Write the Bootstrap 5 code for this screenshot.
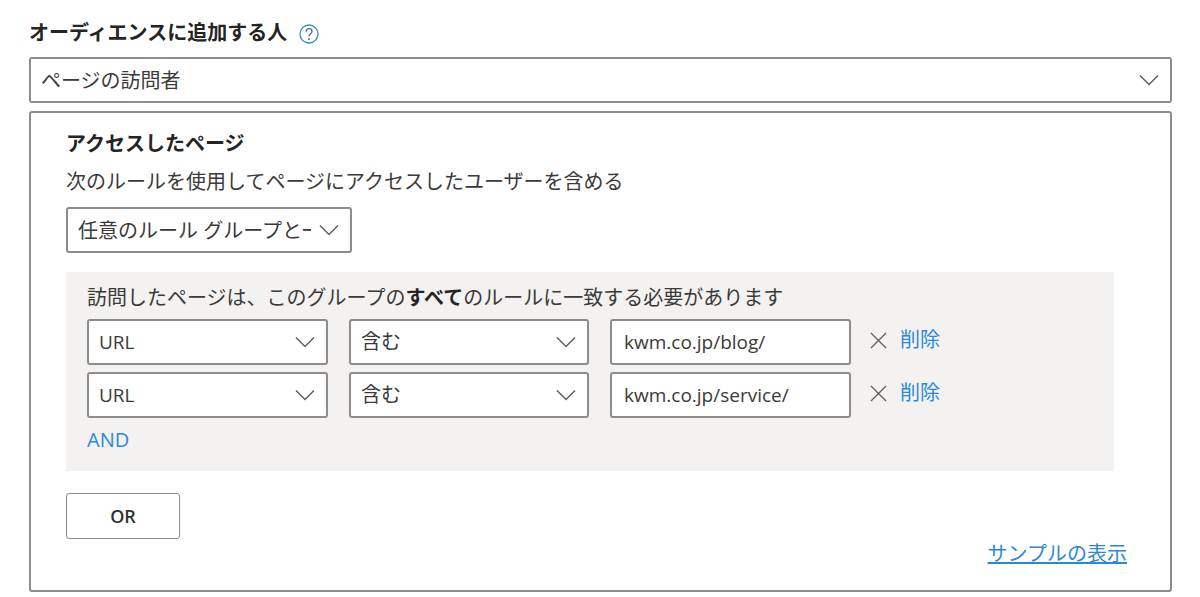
<!DOCTYPE html>
<html lang="ja">
<head>
<meta charset="utf-8">
<title>オーディエンスに追加する人</title>
<link href="https://cdn.jsdelivr.net/npm/bootstrap@5.3.0/dist/css/bootstrap.min.css" rel="stylesheet">
<style>
html,body{height:597px;overflow:hidden;background:#fff}
body{font-family:"Open Sans","Noto Sans CJK JP",sans-serif;font-size:20px;color:#3b3a39;line-height:26px}
.page-wrap{padding:19px 28px 0 29px}
.head-label{font-weight:700;color:#252423;height:26px;margin-bottom:12px}
.head-text{padding-top:1px}
.help-ico{width:20px;height:20px;margin-left:12px;margin-top:3px}
.fake-sel{height:46px;border:2px solid #8f8d8b;border-radius:3px;background:#fff;padding:0 11px 0 10px;display:flex;align-items:center;justify-content:space-between;white-space:nowrap;overflow:hidden;flex:none}
.fake-sel svg{flex:none;width:20px;height:12px}
.sel-text{overflow:hidden;padding-top:2px}
.latin-val{font-size:19px}
.panel-box{margin-top:8px;height:481px;border:2px solid #8f8d8b;border-radius:3px;padding:18px 42px 0 35px}
.panel-title{font-weight:700;color:#252423;height:26px;margin-bottom:12px}
.panel-sub{height:26px;margin-bottom:12px}
.w-rule{width:286px}
.group-box{background:#f3f2f1;height:199px;width:1048px;margin-top:19px;padding:13px 21px 0}
.rule-line{height:26px;margin-bottom:8px}
.rule-line b{color:#252423}
.rule-row{margin-bottom:7px;gap:21px}
.w-cell{width:241px}
.w-cell2{width:240px}
.txt-input{height:46px;width:241px;border:2px solid #8f8d8b;border-radius:3px;background:#fff;padding:0 12px;display:flex;align-items:center;white-space:nowrap}
.blue-link{color:#2b88d8;text-decoration:none}
.del-wrap{display:flex;align-items:center;margin-left:-2px;padding-bottom:4px}
.x-ico{width:17px;height:17px;margin-right:13px}
.and-link{display:block;margin-top:9px}
.or-btn{display:block;margin-top:22px;width:114px;height:46px;border:1px solid #8f8d8b;border-radius:3px;background:#fff;font-weight:600;font-size:18px;color:#323130;padding:0}
.sample-row{margin-top:2px;padding-right:1px;text-align:right}
.sample-row a{color:#2b88d8;text-decoration:underline}
</style>
</head>
<body>
<svg width="0" height="0" class="position-absolute"><defs>
<symbol id="chev" viewBox="0 0 20 12"><path d="M1 1.500 10 10.500 19 1.500" fill="none" stroke="#605e5c" stroke-width="1.500"/></symbol>
</defs></svg>
<div class="page-wrap">
  <div class="head-label d-flex align-items-center"><span class="head-text">オーディエンスに追加する人</span>
    <svg class="help-ico" viewBox="0 0 20 20"><circle cx="10" cy="10" r="9" fill="none" stroke="#2b88d8" stroke-width="1.300"/><path d="M7.100 7.700C7.200 5.700 8.600 4.700 10 4.700c1.700 0 3 1.100 3 2.700 0 2.500-3 2.400-3 5" fill="none" stroke="#4a6f93" stroke-width="1.300"/><circle cx="10" cy="15" r="1" fill="#4a6f93"/></svg>
  </div>
  <div class="fake-sel"><span class="sel-text">ページの訪問者</span><svg><use href="#chev"/></svg></div>
  <div class="panel-box">
    <div class="panel-title">アクセスしたページ</div>
    <div class="panel-sub">次のルールを使用してページにアクセスしたユーザーを含める</div>
    <div class="fake-sel w-rule"><span class="sel-text">任意のルール グループと一致</span><svg class="ms-2"><use href="#chev"/></svg></div>
    <div class="group-box">
      <div class="rule-line">訪問したページは、このグループの<b>すべて</b>のルールに一致する必要があります</div>
      <div class="d-flex rule-row">
        <div class="fake-sel w-cell"><span class="latin-val">URL</span><svg><use href="#chev"/></svg></div>
        <div class="fake-sel w-cell2"><span>含む</span><svg><use href="#chev"/></svg></div>
        <div class="txt-input latin-val">kwm.co.jp/blog/</div>
        <div class="del-wrap"><svg class="x-ico" viewBox="0 0 17 17"><path d="M1 1 16 16M16 1 1 16" stroke="#605e5c" stroke-width="1.300"/></svg><a href="#" class="blue-link">削除</a></div>
      </div>
      <div class="d-flex rule-row">
        <div class="fake-sel w-cell"><span class="latin-val">URL</span><svg><use href="#chev"/></svg></div>
        <div class="fake-sel w-cell2"><span>含む</span><svg><use href="#chev"/></svg></div>
        <div class="txt-input latin-val">kwm.co.jp/service/</div>
        <div class="del-wrap"><svg class="x-ico" viewBox="0 0 17 17"><path d="M1 1 16 16M16 1 1 16" stroke="#605e5c" stroke-width="1.300"/></svg><a href="#" class="blue-link">削除</a></div>
      </div>
      <a href="#" class="blue-link and-link">AND</a>
    </div>
    <button type="button" class="btn or-btn">OR</button>
    <div class="sample-row"><a href="#">サンプルの表示</a></div>
  </div>
</div>
</body>
</html>
